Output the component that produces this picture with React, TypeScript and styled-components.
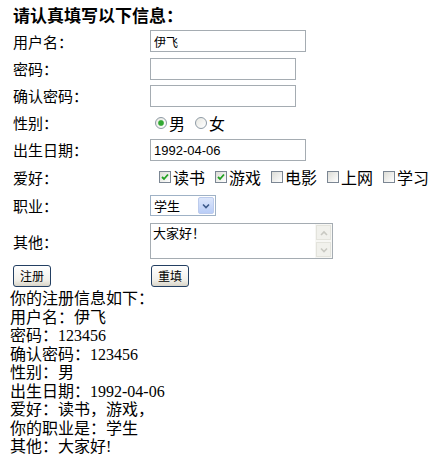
import React from 'react';
import styled, { createGlobalStyle } from 'styled-components';

const Global = createGlobalStyle`
  html, body { margin: 0; padding: 0; background: #fff; }
  body { font-family: "Noto Sans CJK SC", sans-serif; color: #000; }
`;

const Page = styled.div`
  width: 436px;
  height: 465px;
  overflow: hidden;
  padding-top: 2px;
  box-sizing: border-box;
`;

const Title = styled.h3`
  margin: 0;
  padding-left: 13px;
  height: 25px;
  display: flex;
  align-items: center;
  font: bold 17px/1 "Noto Sans CJK SC", sans-serif;
`;

const Row = styled.div<{ $h: number }>`
  display: grid;
  grid-template-columns: 137px 1fr;
  align-items: center;
  height: ${p => p.$h}px;
  padding-left: 13px;
`;

const Label = styled.label`
  font: 15px/1 "Noto Sans CJK SC", sans-serif;
`;

const Field = styled.div`
  display: flex;
  align-items: center;
`;

const TextInput = styled.input<{ $w: number; $latin?: boolean }>`
  width: ${p => p.$w}px;
  height: 22px;
  box-sizing: border-box;
  margin: 0;
  border: 1px solid #a5acb2;
  padding: 1px 3px 0;
  outline: none;
  color: #000;
  font: ${p => (p.$latin ? '13px "Liberation Sans", Arial, sans-serif' : '12px "Noto Sans CJK SC", sans-serif')};
`;

const Choice = styled.label`
  display: inline-flex;
  align-items: center;
  font: 16px/1 "Noto Sans CJK SC", sans-serif;
`;

const Radio = styled.input.attrs({ type: 'radio' })`
  appearance: none;
  width: 12px;
  height: 12px;
  margin: 0 2px 0 0;
  border-radius: 50%;
  border: 1px solid #8e9aa5;
  box-sizing: border-box;
  background: linear-gradient(135deg, #e8e8e2, #ffffff);
  &:checked {
    background: radial-gradient(circle, #33a833 0 2.2px, #7cc87c 2.8px, transparent 3.3px),
      linear-gradient(135deg, #e8e8e2, #ffffff);
  }
`;

const RadioGroup = styled.div`
  display: flex;
  align-items: center;
  gap: 10px;
  padding-left: 5px;
`;

const CheckGroup = styled.div`
  display: flex;
  align-items: center;
  gap: 10px;
  padding-left: 9px;
`;

const Box = styled.span`
  width: 12px;
  height: 12px;
  box-sizing: border-box;
  margin-right: 2px;
  border: 1px solid #7b8693;
  background: linear-gradient(135deg, #dcdcd6, #ffffff);
  display: inline-flex;
  align-items: center;
  justify-content: center;
`;

const CheckBox: React.FC<{ on?: boolean }> = ({ on }) => (
  <Box>
    {on && (
      <svg width="8" height="8" viewBox="0 0 8 8">
        <path d="M1 4 L3 6 L7 1.5" fill="none" stroke="#21a121" strokeWidth="1.8" />
      </svg>
    )}
  </Box>
);

const SelectBox = styled.div`
  width: 66px;
  height: 21px;
  box-sizing: border-box;
  border: 1px solid #9fb2c6;
  display: flex;
  align-items: stretch;
  background: #fff;
`;

const Select = styled.select`
  appearance: none;
  flex: 1;
  border: none;
  outline: none;
  background: transparent;
  padding: 0 0 0 3px;
  margin: 0;
  font: 13px "Noto Sans CJK SC", sans-serif;
  color: #000;
`;

const DropButton = styled.span`
  width: 16px;
  margin: 1px;
  border-radius: 2px;
  background: linear-gradient(#dce6fb, #b9cdf7);
  border: 1px solid #bccbec;
  box-sizing: border-box;
  display: flex;
  align-items: center;
  justify-content: center;
`;

const TextBox = styled.div`
  width: 183px;
  height: 36px;
  box-sizing: border-box;
  border: 1px solid #a5acb2;
  display: flex;
`;

const Area = styled.textarea`
  flex: 1;
  border: none;
  outline: none;
  resize: none;
  overflow: hidden;
  margin: 0;
  padding: 1px 2px;
  font: 13px/16px "Noto Sans CJK SC", sans-serif;
  color: #000;
`;

const ScrollBar = styled.div`
  width: 17px;
  display: flex;
  flex-direction: column;
  background: #f7f7f4;
`;

const ScrollButton = styled.span`
  flex: 1;
  margin: 1px;
  border: 1px solid #e3e3dc;
  background: #f1f1ec;
  display: flex;
  align-items: center;
  justify-content: center;
`;

const Button = styled.button<{ $shift?: number }>`
  width: 38px;
  height: 22px;
  margin: 0 0 0 ${p => p.$shift ?? 0}px;
  padding: 0;
  border: 1px solid #233f62;
  border-radius: 3px;
  background: linear-gradient(#ffffff, #f1f0ea 70%, #d8d4c8);
  font: 12px/1 "Noto Sans CJK SC", sans-serif;
  color: #000;
`;

const Result = styled.div`
  padding-left: 10px;
  font: 16px/18.5px "Liberation Serif", "Noto Sans CJK SC", serif;
`;

const Line = styled.div``;

const Chevron: React.FC<{ up?: boolean; color: string }> = ({ up, color }) => (
  <svg width="8" height="6" viewBox="0 0 8 6">
    <path d={up ? 'M1 5 L4 2 L7 5' : 'M1 1.5 L4 4.5 L7 1.5'} fill="none" stroke={color} strokeWidth="1.6" />
  </svg>
);

const hobbies: [string, boolean][] = [
  ['读书', true],
  ['游戏', true],
  ['电影', false],
  ['上网', false],
  ['学习', false],
];

const results = [
  '你的注册信息如下：',
  '用户名：伊飞',
  '密码：123456',
  '确认密码：123456',
  '性别：男',
  '出生日期：1992-04-06',
  '爱好：读书，游戏，',
  '你的职业是：学生',
  '其他：大家好!',
];

export default function App() {
  return (
    <Page>
      <Global />
      <Title>请认真填写以下信息：</Title>
      <Row $h={28}>
        <Label>用户名：</Label>
        <Field><TextInput $w={156} defaultValue="伊飞" /></Field>
      </Row>
      <Row $h={27}>
        <Label>密码：</Label>
        <Field><TextInput $w={146} type="password" /></Field>
      </Row>
      <Row $h={27}>
        <Label>确认密码：</Label>
        <Field><TextInput $w={146} type="password" /></Field>
      </Row>
      <Row $h={27}>
        <Label>性别：</Label>
        <RadioGroup>
          <Choice><Radio name="sex" defaultChecked />男</Choice>
          <Choice><Radio name="sex" />女</Choice>
        </RadioGroup>
      </Row>
      <Row $h={27}>
        <Label>出生日期：</Label>
        <Field><TextInput $w={156} $latin defaultValue="1992-04-06" /></Field>
      </Row>
      <Row $h={28}>
        <Label>爱好：</Label>
        <CheckGroup>
          {hobbies.map(([name, on]) => (
            <Choice key={name}><CheckBox on={on} />{name}</Choice>
          ))}
        </CheckGroup>
      </Row>
      <Row $h={29}>
        <Label>职业：</Label>
        <Field>
          <SelectBox>
            <Select defaultValue="学生">
              <option>学生</option>
              <option>教师</option>
            </Select>
            <DropButton><Chevron color="#3d5a8a" /></DropButton>
          </SelectBox>
        </Field>
      </Row>
      <Row $h={42}>
        <Label>其他：</Label>
        <Field>
          <TextBox>
            <Area defaultValue="大家好！" />
            <ScrollBar>
              <ScrollButton><Chevron up color="#c9c9c2" /></ScrollButton>
              <ScrollButton><Chevron color="#c9c9c2" /></ScrollButton>
            </ScrollBar>
          </TextBox>
        </Field>
      </Row>
      <Row $h={28}>
        <Field><Button>注册</Button></Field>
        <Field><Button $shift={1}>重填</Button></Field>
      </Row>
      <Result>
        {results.map(t => (
          <Line key={t}>{t}</Line>
        ))}
      </Result>
    </Page>
  );
}
